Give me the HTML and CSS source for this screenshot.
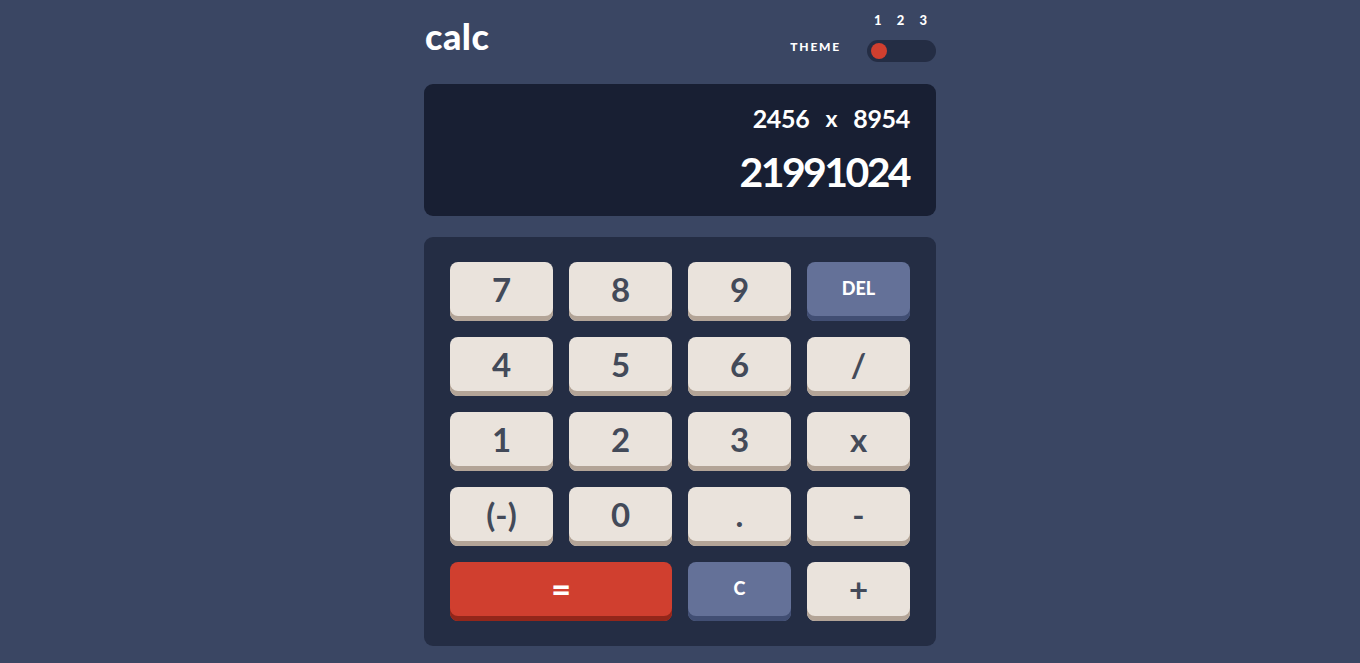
FILE: index.html
```html
<!DOCTYPE html>
<html lang="en">
<head>
<meta charset="utf-8">
<title>calc</title>
<link rel="stylesheet" href="styles.css">
</head>
<body>
<main class="calc">
  <header class="top">
    <h1 class="logo">calc</h1>
    <div class="theme">
      <span class="theme-label">THEME</span>
      <div class="theme-switch">
        <div class="theme-nums"><span>1</span><span>2</span><span>3</span></div>
        <div class="toggle"><span class="dot"></span></div>
      </div>
    </div>
  </header>
  <section class="screen">
    <div class="expr"><span>2456</span><span class="op">x</span><span>8954</span></div>
    <div class="result">21991024</div>
  </section>
  <section class="keypad">
    <button class="key">7</button>
    <button class="key">8</button>
    <button class="key">9</button>
    <button class="key key-alt key-word">DEL</button>
    <button class="key">4</button>
    <button class="key">5</button>
    <button class="key">6</button>
    <button class="key">/</button>
    <button class="key">1</button>
    <button class="key">2</button>
    <button class="key">3</button>
    <button class="key">x</button>
    <button class="key">(-)</button>
    <button class="key">0</button>
    <button class="key">.</button>
    <button class="key">-</button>
    <button class="key key-eq">=</button>
    <button class="key key-alt key-word">C</button>
    <button class="key">+</button>
  </section>
</main>
</body>
</html>
```
FILE: styles.css
```css
* { box-sizing: border-box; }
html, body { margin: 0; padding: 0; }
body {
  background: #3a4663;
  font-family: "Lato", "Liberation Sans", sans-serif;
  font-weight: 700;
  color: #ffffff;
  height: 663px;
  overflow: hidden;
}
.calc {
  width: 512px;
  margin: 0 auto;
}
.top {
  display: flex;
  justify-content: space-between;
  align-items: flex-start;
  height: 84px;
  padding-top: 12px;
}
.logo {
  margin: 6px 0 0 1px;
  font-size: 36px;
  line-height: 36px;
  font-weight: 900;
  letter-spacing: 0.5px;
}
.theme {
  display: flex;
  align-items: flex-end;
  gap: 26px;
}
.theme-label {
  font-size: 12px;
  font-weight: 900;
  letter-spacing: 1.8px;
  line-height: 14px;
  margin-bottom: 8px;
}
.theme-switch {
  display: flex;
  flex-direction: column;
  width: 69px;
}
.theme-nums {
  display: flex;
  justify-content: space-between;
  padding: 0 9px 0 7px;
  font-size: 13px;
  font-weight: 900;
  line-height: 16px;
  height: 28px;
}
.toggle {
  height: 22px;
  border-radius: 11px;
  background: #242d44;
  display: flex;
  align-items: center;
  padding-left: 4px;
}
.dot {
  width: 16px;
  height: 16px;
  border-radius: 50%;
  background: #d03f2f;
}
.screen {
  height: 132px;
  background: #181f33;
  border-radius: 9px;
  padding: 20px 26px 0;
  display: flex;
  flex-direction: column;
  align-items: flex-end;
}
.expr {
  font-size: 25px;
  line-height: 28px;
  display: flex;
  gap: 16px;
  letter-spacing: -0.3px;
}
.expr .op { font-size: 23px; }
.result {
  margin-top: 17px;
  font-size: 41px;
  line-height: 46px;
  letter-spacing: -2.6px;
  padding-right: 1px;
}
.keypad {
  margin-top: 21px;
  background: #242d44;
  border-radius: 9px;
  padding: 25px 26px;
  display: grid;
  grid-template-columns: repeat(4, 103px);
  grid-auto-rows: 59px;
  gap: 16px;
}
.key {
  border: 0;
  margin: 0;
  border-radius: 8px;
  background: #eae3dc;
  box-shadow: inset 0 -5px 0 #b3a497;
  color: #434a59;
  font-family: inherit;
  font-weight: 700;
  font-size: 33px;
  line-height: 1;
  padding: 0 0 5px;
  display: flex;
  align-items: center;
  justify-content: center;
}
.key-alt {
  background: #647198;
  box-shadow: inset 0 -5px 0 #414e73;
  color: #ffffff;
}
.key-word { font-size: 18px; font-weight: 900; padding-bottom: 8px; }
.key-eq {
  grid-column: span 2;
  background: #d03f2f;
  box-shadow: inset 0 -5px 0 #93261a;
  color: #ffffff;
  font-size: 34px;
  font-weight: 900;
}
```
